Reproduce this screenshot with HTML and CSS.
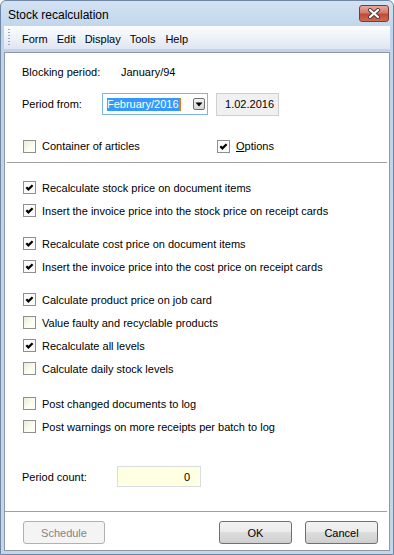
FILE: index.html
```html
<!DOCTYPE html>
<html lang="en">
<head>
    <meta charset="UTF-8">
    <meta name="viewport" content="width=device-width, initial-scale=1.0">
    <title>Stock recalculation</title>
    <link rel="stylesheet" href="styles.css">
</head>
<body>

    <div class="window">

        <!-- Title bar -->
        <div class="titlebar">
            <span class="title">Stock recalculation</span>
            <span class="close">
                <svg width="14" height="11" viewBox="0 0 14 11">
                    <path d="M3 2 L11 9 M11 2 L3 9" stroke="#4a3a3a" stroke-width="4" stroke-linecap="round"/>
                    <path d="M3 2 L11 9 M11 2 L3 9" stroke="#ffffff" stroke-width="2.2" stroke-linecap="round"/>
                </svg>
            </span>
        </div>

        <!-- Menu bar -->
        <div class="menubar">
            <span class="grip"></span>
            <span class="menu-item">Form</span>
            <span class="menu-item">Edit</span>
            <span class="menu-item">Display</span>
            <span class="menu-item">Tools</span>
            <span class="menu-item">Help</span>
        </div>

        <!-- Dialog body -->
        <div class="client">
            <div class="content">
                <div class="row row-info">
                    <span class="label">Blocking period:</span>
                    <span>January/94</span>
                </div>

                <div class="row row-period">
                    <span class="label short">Period from:</span>
                    <div class="combo">
                        <span class="selected">February/2016</span><span class="caret"></span>
                        <span class="drop">
                            <svg width="8" height="5" viewBox="0 0 8 5"><path d="M0.5 0.5 L7.5 0.5 L4 4.5 Z" fill="#000"/></svg>
                        </span>
                    </div>
                    <div class="datebox">1.02.2016</div>
                </div>

                <div class="row row-flags">
                    <label class="check wide"><span class="box"></span>Container of articles</label>
                    <label class="check"><span class="box checked"></span><span><u>O</u>ptions</span></label>
                </div>
            </div>

            <div class="sep top-sep"></div>

            <div class="checks">
                <div class="group first">
                    <label class="check"><span class="box checked"></span>Recalculate stock price on document items</label>
                    <label class="check"><span class="box checked"></span>Insert the invoice price into the stock price on receipt cards</label>
                </div>
                <div class="group">
                    <label class="check"><span class="box checked"></span>Recalculate cost price on document items</label>
                    <label class="check"><span class="box checked"></span>Insert the invoice price into the cost price on receipt cards</label>
                </div>
                <div class="group">
                    <label class="check"><span class="box checked"></span>Calculate product price on job card</label>
                    <label class="check"><span class="box"></span>Value faulty and recyclable products</label>
                    <label class="check"><span class="box checked"></span>Recalculate all levels</label>
                    <label class="check"><span class="box"></span>Calculate daily stock levels</label>
                </div>
                <div class="group last">
                    <label class="check"><span class="box"></span>Post changed documents to log</label>
                    <label class="check"><span class="box"></span>Post warnings on more receipts per batch to log</label>
                </div>

                <div class="row row-count">
                    <span class="label count">Period count:</span>
                    <div class="number">0</div>
                </div>
            </div>

            <!-- Buttons -->
            <div class="footer">
                <div class="sep"></div>
                <div class="buttons">
                    <button class="btn" disabled>Schedule</button>
                    <button class="btn ok">OK</button>
                    <button class="btn">Cancel</button>
                </div>
            </div>
        </div>
    </div>

</body>
</html>
```

FILE: styles.css
```css
/* Page */
html, body {
    margin: 0;
    padding: 0;
}

body {
    font-family: "Liberation Sans", Arial, sans-serif;
    font-size: 11px;
    color: #000;
    background-color: #ffffff;
}

/* Window frame */
.window {
    width: 394px;
    height: 555px;
    box-sizing: border-box;
    display: flex;
    flex-direction: column;
    border: 1px solid #6f87a5;
    border-radius: 6px 6px 0 0;
    padding: 0 3px 3px 3px;
    background: linear-gradient(#d3e2f3, #bfd4eb 30px, #c2d6ec);
}

/* Title bar */
.titlebar {
    height: 25px;
    display: flex;
    justify-content: space-between;
    align-items: flex-start;
}

.title {
    font-size: 12px;
    padding: 7px 0 0 4px;
}

.close {
    width: 28px;
    height: 15px;
    margin: 4px 1px 0 0;
    display: flex;
    justify-content: center;
    align-items: center;
    border: 1px solid #7a3b32;
    border-radius: 3px;
    background: linear-gradient(#e9a99b, #d27a6a 45%, #c04a36 55%, #cf6a52);
}

/* Menu bar */
.menubar {
    height: 24px;
    box-sizing: border-box;
    display: flex;
    align-items: center;
    gap: 9px;
    background: linear-gradient(#fbfcfe, #eef2f9 50%, #dfe6f1);
    border-bottom: 1px solid #c5d3e5;
}

.grip {
    width: 2px;
    height: 17px;
    margin: 0 3px 0 4px;
    background: repeating-linear-gradient(#9aa8bb 0 1px, transparent 1px 3px);
}

.menu-item {
    padding-top: 2px;
}

.menu-item:last-child {
    margin-left: 1px;
}

/* Dialog client area */
.client {
    flex-grow: 1;
    margin-top: 2px;
    display: flex;
    flex-direction: column;
    border: 1px solid #8f98a3;
    background-color: #ffffff;
}

.content {
    padding: 9px 0 0 17px;
}

.row {
    display: flex;
    align-items: center;
}

.row-info {
    height: 20px;
}

.label {
    width: 99px;
}

.label.short {
    width: 80px;
}

.row-period {
    height: 22px;
    margin-top: 11px;
}

/* Period combo box */
.combo {
    width: 106px;
    height: 22px;
    box-sizing: border-box;
    display: flex;
    align-items: center;
    border: 1px solid #7eb4ea;
    padding-left: 4px;
    background-color: #fff;
}

.selected {
    background-color: #3399ff;
    color: #fff;
    line-height: 13px;
}

.caret {
    width: 2px;
    height: 13px;
    background-color: #e07b20;
}

.drop {
    width: 10px;
    height: 10px;
    margin-left: auto;
    margin-right: 2px;
    display: flex;
    justify-content: center;
    align-items: center;
    border: 1px solid #6f6f6f;
    border-radius: 2px;
    background: linear-gradient(#f4f4f4, #d6d6d6);
}

.datebox {
    width: 63px;
    height: 23px;
    box-sizing: border-box;
    margin-left: 8px;
    padding-right: 4px;
    display: flex;
    align-items: center;
    justify-content: flex-end;
    background-color: #f0f0f0;
    border: 1px solid #cfcfcf;
}

.row-flags {
    height: 20px;
    margin-top: 21px;
}

/* Check boxes */
.check {
    display: flex;
    align-items: center;
    gap: 6px;
    height: 23px;
}

.row-flags .check {
    height: 20px;
    padding-left: 1px;
}

.row-flags .check.wide {
    width: 193px;
}

.box {
    width: 11px;
    height: 11px;
    border: 1px solid #8e8f8f;
    background: linear-gradient(135deg, #ebebd8, #fdfdf2 60%, #fffff8);
    flex-shrink: 0;
}

.box.checked {
    background: #fbfbfb url("data:image/svg+xml,%3Csvg xmlns='http://www.w3.org/2000/svg' width='11' height='11'%3E%3Cpath d='M2.3 5.3 L4.4 7.4 L8.6 3.2' fill='none' stroke='%23000' stroke-width='2.2'/%3E%3C/svg%3E") no-repeat;
}

/* Separators */
.sep {
    height: 1px;
    background-color: #a0a0a0;
    margin-right: 2px;
}

.top-sep {
    margin-top: 6px;
    margin-left: 2px;
}

.checks {
    padding-left: 18px;
}

.group {
    margin-top: 10px;
}

.group.first {
    margin-top: 13px;
}

.group.last {
    margin-top: 12px;
}

.row-count {
    height: 21px;
    margin-top: 28px;
}

.label.count {
    width: 95px;
    margin-left: -1px;
}

.number {
    width: 84px;
    height: 21px;
    box-sizing: border-box;
    display: flex;
    align-items: center;
    justify-content: flex-end;
    padding-right: 10px;
    background-color: #ffffe1;
    border: 1px solid #d8dde3;
}

/* Footer and buttons */
.footer {
    margin-top: auto;
}

.buttons {
    display: flex;
    gap: 13px;
    padding: 9px 11px 6px 18px;
}

.btn {
    width: 73px;
    height: 23px;
    font-family: "Liberation Sans", Arial, sans-serif;
    font-size: 11px;
    color: #000;
    border: 1px solid #707070;
    border-radius: 3px;
    background: linear-gradient(#f2f2f2, #ebebeb 50%, #dddddd 50%, #cfcfcf);
    padding: 0;
}

.btn:disabled {
    width: 82px;
    color: #838383;
    border-color: #adb2b5;
    background: #f4f4f4;
}

.btn.ok {
    margin-left: auto;
}
```
